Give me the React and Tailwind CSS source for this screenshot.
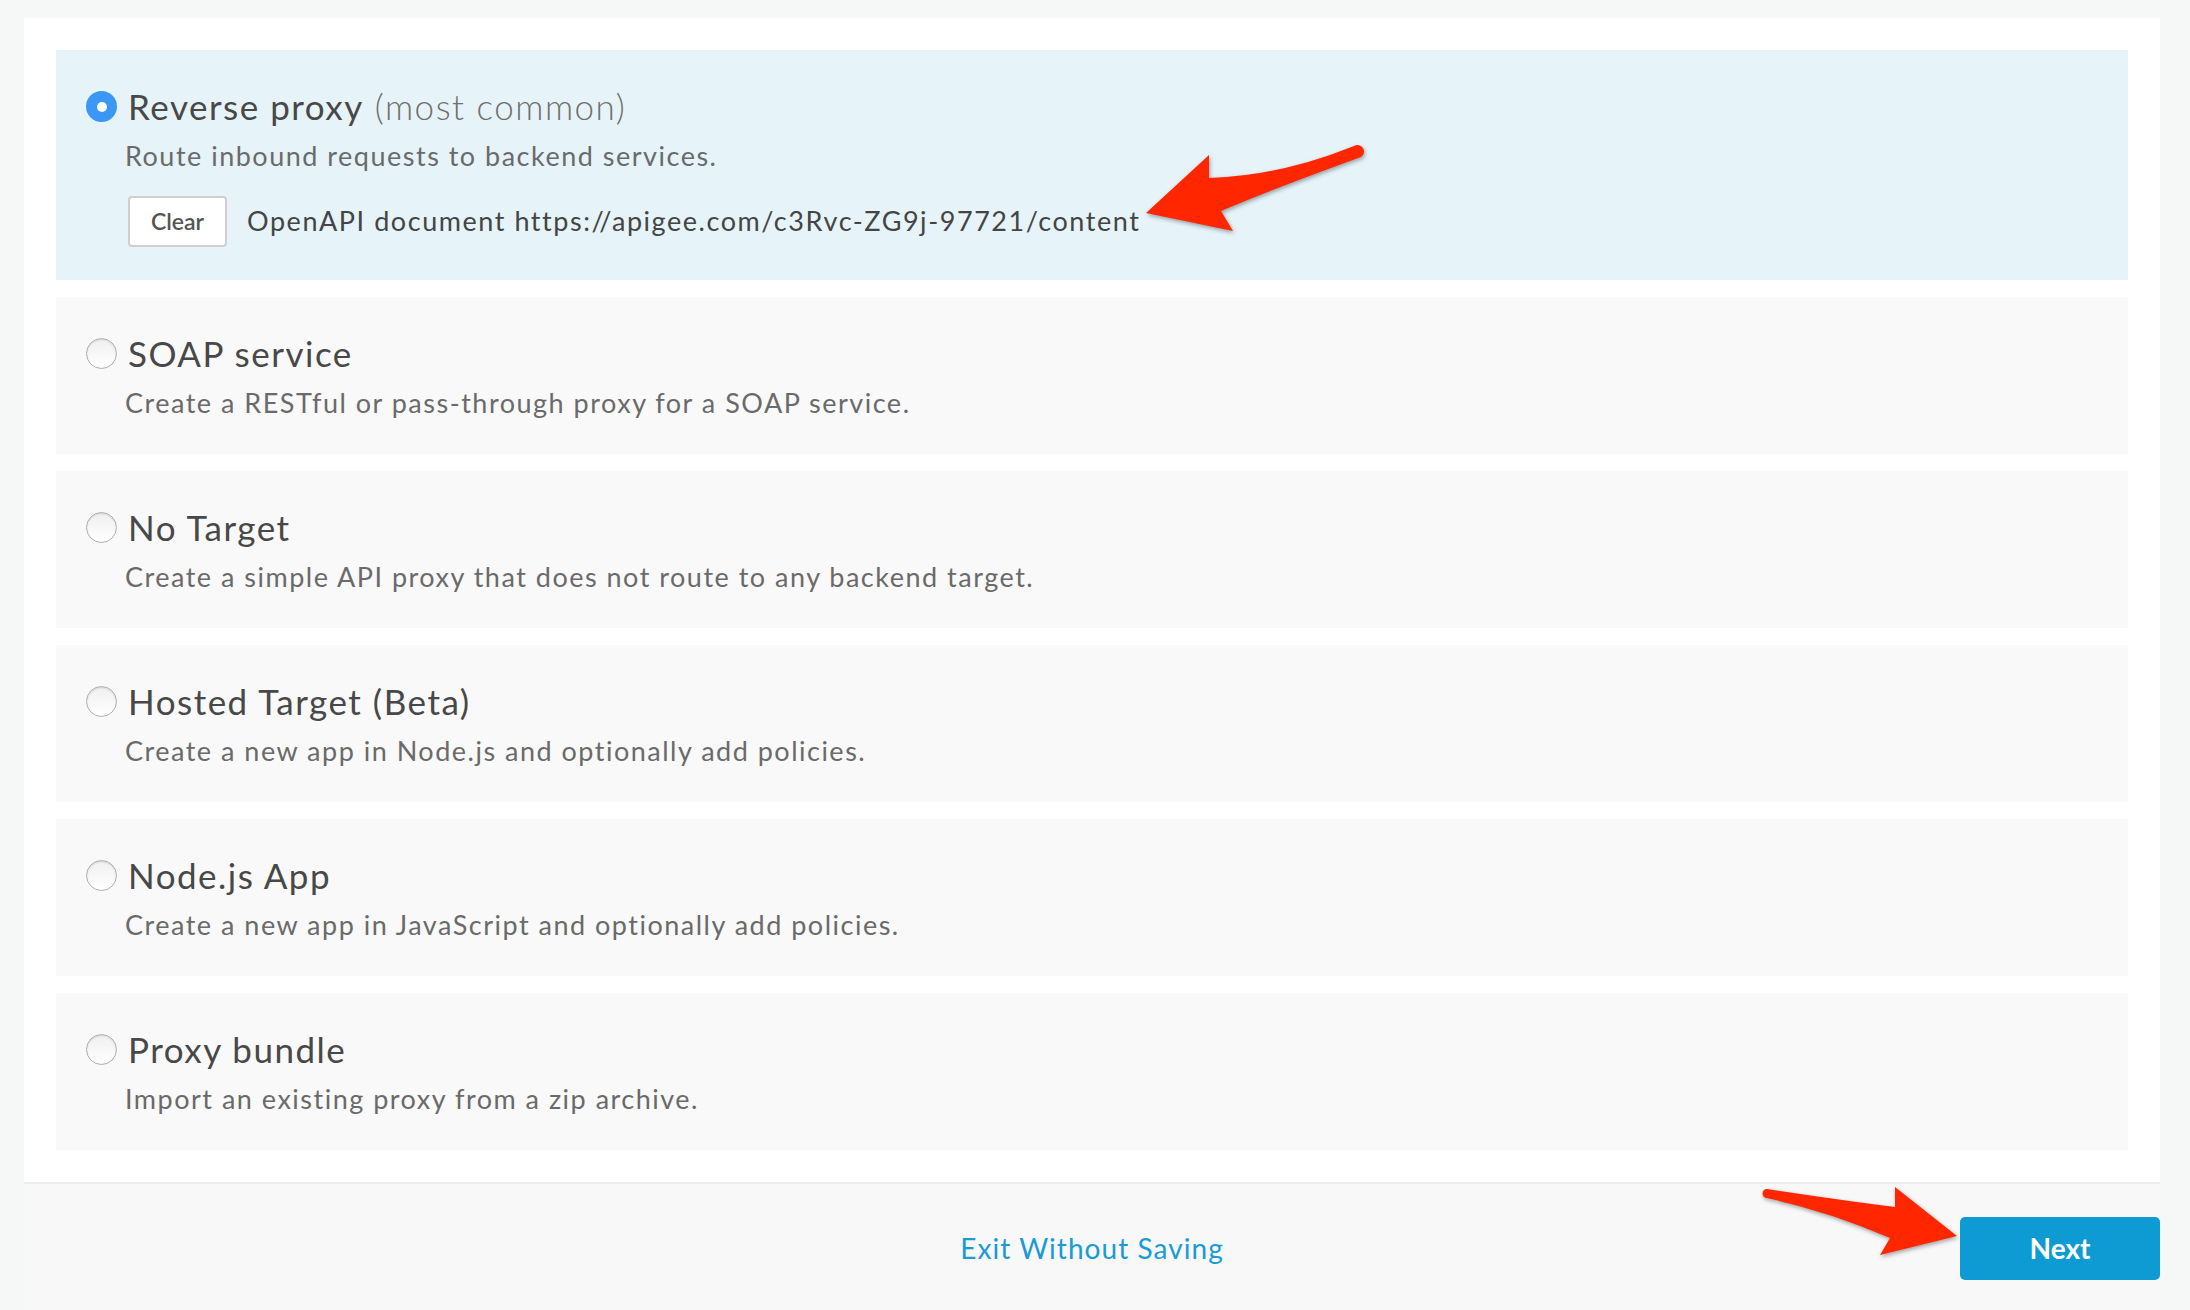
import React, { useState } from 'react';

const OPTIONS = [
  { id: 'reverse', title: 'Reverse proxy', note: '(most common)', desc: 'Route inbound requests to backend services.' },
  { id: 'soap', title: 'SOAP service', desc: 'Create a RESTful or pass-through proxy for a SOAP service.' },
  { id: 'none', title: 'No Target', desc: 'Create a simple API proxy that does not route to any backend target.' },
  { id: 'hosted', title: 'Hosted Target (Beta)', desc: 'Create a new app in Node.js and optionally add policies.' },
  { id: 'node', title: 'Node.js App', desc: 'Create a new app in JavaScript and optionally add policies.' },
  { id: 'bundle', title: 'Proxy bundle', desc: 'Import an existing proxy from a zip archive.' },
];

const Radio = ({ checked }) =>
  checked ? (
    <span className="flex h-[31px] w-[31px] shrink-0 items-center justify-center rounded-full bg-[#3b97f4]">
      <span className="h-[10px] w-[10px] rounded-full bg-white" />
    </span>
  ) : (
    <span className="h-[31px] w-[31px] shrink-0 rounded-full border border-[#b0b0b0] bg-gradient-to-b from-[#f0f0f0] to-white shadow-[inset_0_1px_2px_rgba(0,0,0,0.12)]" />
  );

const OptionCard = ({ option, selected, onSelect }) => (
  <div
    onClick={() => onSelect(option.id)}
    className={`cursor-pointer pl-[30px] pr-8 pt-[36px] ${selected ? 'bg-[#e6f4fa] pb-[33px]' : 'bg-[#f9f9f9] pb-[36px]'}`}
  >
    <div className="flex items-center gap-[11px]">
      <Radio checked={selected} />
      <div className="text-[35px] leading-[41px] tracking-[1.5px] text-[#484848]">
        {option.title}
        {option.note && <span className="font-light text-[#6f6f6f]"> {option.note}</span>}
      </div>
    </div>
    <p className="ml-[39px] mt-[13px] text-[27px] leading-[31px] tracking-[1.5px] text-[#6a6a6a]">{option.desc}</p>
    {selected && option.id === 'reverse' && (
      <div className="ml-[42px] mt-[25px] flex items-center gap-[20px]">
        <button className="h-[51px] w-[99px] rounded-[4px] border-2 border-[#cfcfcf] bg-white text-[23px] font-semibold text-[#555]">
          Clear
        </button>
        <span className="text-[27px] tracking-[1.55px] text-[#444]">
          OpenAPI document https://apigee.com/c3Rvc-ZG9j-97721/content
        </span>
      </div>
    )}
  </div>
);

export default function App() {
  const [selected, setSelected] = useState('reverse');

  return (
    <div className="relative min-h-[1310px] bg-[#f6f7f7] pl-[24px] pr-[30px] pt-[18px] font-['Lato','Open_Sans',sans-serif]">
      <div className="border-b-2 border-[#ececec] bg-white p-8">
        <div className="flex flex-col gap-[17px]">
          {OPTIONS.map((o) => (
            <OptionCard key={o.id} option={o} selected={selected === o.id} onSelect={setSelected} />
          ))}
        </div>
      </div>

      {/* footer actions */}
      <div className="grid h-[128px] grid-cols-[1fr_auto_1fr] items-center bg-[#f8f8f8]">
        <span />
        <a href="#" className="text-[28px] tracking-[1.05px] text-[#1a9ad6]">Exit Without Saving</a>
        <button className="h-[63px] w-[200px] justify-self-end rounded-[5px] bg-[#0e9bd3] text-[28px] font-bold text-white">
          Next
        </button>
      </div>

      {/* annotation arrows */}
      <svg
        className="pointer-events-none absolute left-0 top-0 drop-shadow-[1px_2px_2px_rgba(0,0,0,0.35)]"
        width="2190"
        height="1310"
        viewBox="0 0 2190 1310"
      >
        <path
          d="M1146,213 L1209,155 L1209,178 Q1280,176 1354,146 A5.5,5.5 0 0 1 1361,157 Q1270,190 1221,211 L1233,231 Z"
          fill="#ff2600"
        />
        <path
          d="M1957,1236 L1880,1255 L1890,1238 Q1830,1212 1767,1198 A4.5,4.5 0 0 1 1767,1189 Q1840,1200 1895,1207 L1895,1187 Z"
          fill="#ff2600"
        />
      </svg>
    </div>
  );
}
